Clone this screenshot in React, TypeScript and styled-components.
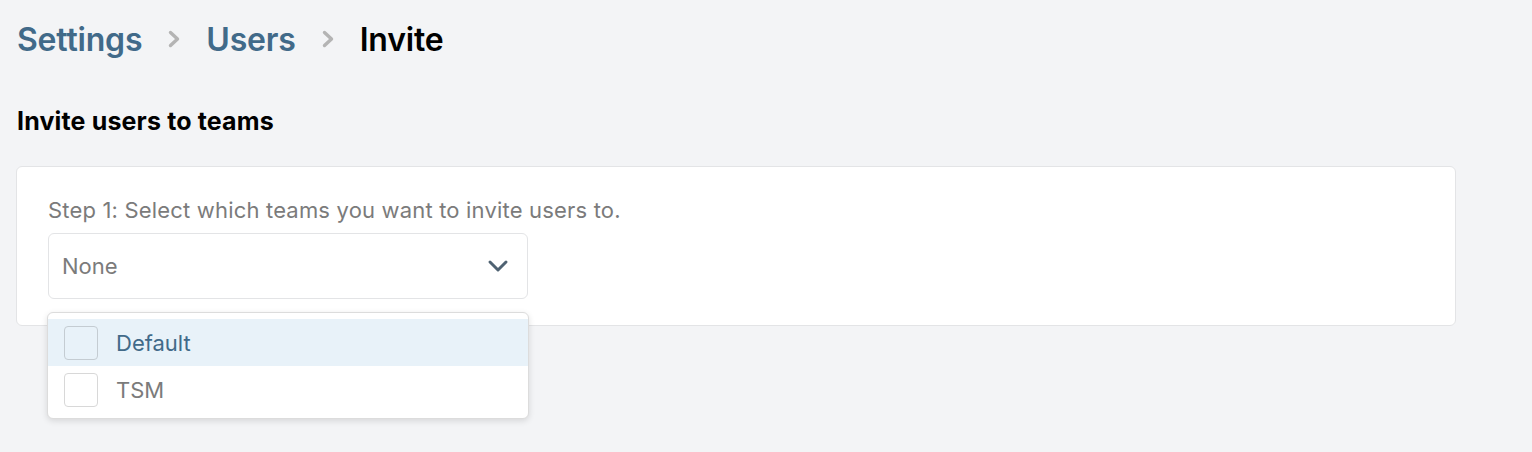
import React, { useState } from 'react';
import styled, { createGlobalStyle, css } from 'styled-components';

const colors = {
  page: '#f3f4f6',
  link: '#416a89',
  crumbSep: '#b4b4b4',
  border: '#e3e4e6',
  muted: '#7b7b7b',
  highlight: '#e8f2f9',
};

const GlobalStyle = createGlobalStyle`
  html, body {
    margin: 0;
    padding: 0;
    background: ${colors.page};
  }
  body {
    font-family: Inter, "Noto Sans", sans-serif;
    color: #000;
  }
`;

const S_Page = styled.div`
  box-sizing: border-box;
  min-height: 100vh;
  padding: 18px 76px 0 16px;
`;

const S_Breadcrumb = styled.nav`
  display: flex;
  align-items: center;
  gap: 25px;
  height: 42px;
  padding-left: 1px;
`;

const S_Crumb = styled.span<{ current?: boolean }>`
  font-size: 32px;
  font-weight: 600;
  letter-spacing: -0.2px;
  color: ${props => (props.current ? '#000' : colors.link)};
`;

const S_Sep = styled.svg`
  width: 14px;
  height: 20px;
  color: ${colors.crumbSep};
`;

const S_Heading = styled.h2`
  margin: 46px 0 0 1px;
  font-size: 25px;
  font-weight: 700;
  line-height: 30px;
  letter-spacing: 0.15px;
`;

const S_Card = styled.section`
  margin-top: 30px;
  background: #fff;
  border: 1px solid ${colors.border};
  border-radius: 6px;
  padding: 29px 31px 26px;
`;

const S_StepLabel = styled.p`
  margin: 0 0 9px;
  font-size: 22px;
  line-height: 28px;
  letter-spacing: 0.18px;
  color: ${colors.muted};
`;

const S_SelectWrap = styled.div`
  position: relative;
  width: 480px;
`;

const S_Select = styled.button`
  display: flex;
  align-items: center;
  justify-content: space-between;
  width: 100%;
  height: 66px;
  padding: 0 18px 0 13px;
  background: #fff;
  border: 1px solid ${colors.border};
  border-radius: 6px;
  font: inherit;
  font-size: 22px;
  color: ${colors.muted};
  cursor: pointer;
`;

const S_Chevron = styled.svg`
  width: 22px;
  height: 14px;
  color: #4f6272;
`;

const S_Menu = styled.ul`
  position: absolute;
  top: 79px;
  left: -1px;
  width: 482px;
  margin: 0;
  padding: 6px 0 5px;
  list-style: none;
  background: #fff;
  border: 1px solid #dcdcdc;
  border-radius: 6px;
  box-shadow: 0 2px 6px rgba(0, 0, 0, 0.12);
  box-sizing: border-box;
`;

const activeOptionCss = css`
  background: ${colors.highlight};
  color: ${colors.link};
`;

const S_Option = styled.li<{ active?: boolean }>`
  display: flex;
  align-items: center;
  gap: 18px;
  height: 47px;
  padding: 0 16px;
  font-size: 22px;
  color: ${colors.muted};
  cursor: pointer;
  ${props => props.active && activeOptionCss}
`;

const S_Box = styled.span<{ active?: boolean }>`
  width: 34px;
  height: 34px;
  box-sizing: border-box;
  border: 1px solid ${props => (props.active ? '#c4ccd2' : '#d8d8d8')};
  border-radius: 4px;
  background: ${props => (props.active ? colors.highlight : '#fff')};
`;

const ChevronRight = () => (
  <S_Sep viewBox="0 0 14 20" fill="none">
    <path d="M3.5 3.5l7 6.5-7 6.5" stroke="currentColor" strokeWidth="3.4" strokeLinecap="round" strokeLinejoin="round" />
  </S_Sep>
);

const teams = ['Default', 'TSM'];

export default function App() {
  const [hovered, setHovered] = useState(0);

  return (
    <>
      <GlobalStyle />
      <S_Page>
        <S_Breadcrumb>
          <S_Crumb>Settings</S_Crumb>
          <ChevronRight />
          <S_Crumb>Users</S_Crumb>
          <ChevronRight />
          <S_Crumb current>Invite</S_Crumb>
        </S_Breadcrumb>

        <S_Heading>Invite users to teams</S_Heading>

        <S_Card>
          <S_StepLabel>Step 1: Select which teams you want to invite users to.</S_StepLabel>
          <S_SelectWrap>
            <S_Select type="button">
              None
              <S_Chevron viewBox="0 0 22 14" fill="none">
                <path d="M3 3l8 8 8-8" stroke="currentColor" strokeWidth="3" strokeLinecap="round" strokeLinejoin="round" />
              </S_Chevron>
            </S_Select>
            <S_Menu>
              {teams.map((team, i) => (
                <S_Option key={team} active={i === hovered} onMouseEnter={() => setHovered(i)}>
                  <S_Box active={i === hovered} />
                  {team}
                </S_Option>
              ))}
            </S_Menu>
          </S_SelectWrap>
        </S_Card>
      </S_Page>
    </>
  );
}
